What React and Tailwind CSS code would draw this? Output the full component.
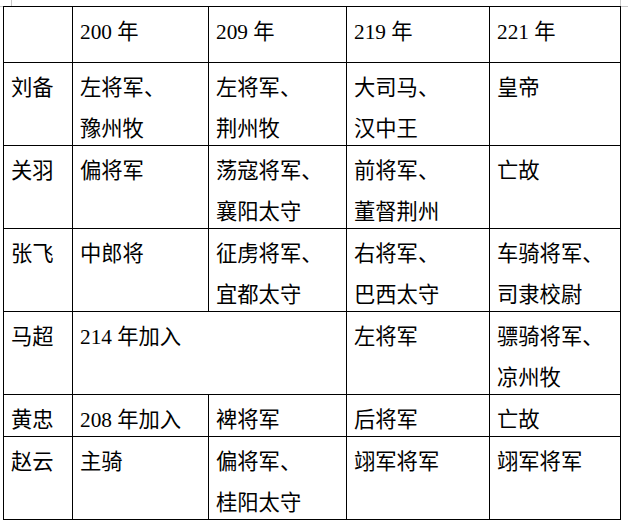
import React from "react";

const rows = [
  ["", "200 年", "209 年", "219 年", "221 年"],
  ["刘备", "左将军、\n豫州牧", "左将军、\n荆州牧", "大司马、\n汉中王", "皇帝"],
  ["关羽", "偏将军", "荡寇将军、\n襄阳太守", "前将军、\n董督荆州", "亡故"],
  ["张飞", "中郎将", "征虏将军、\n宜都太守", "右将军、\n巴西太守", "车骑将军、\n司隶校尉"],
  ["马超", { text: "214 年加入", span: 2 }, "左将军", "骠骑将军、\n凉州牧"],
  ["黄忠", "208 年加入", "裨将军", "后将军", "亡故"],
  ["赵云", "主骑", "偏将军、\n桂阳太守", "翊军将军", "翊军将军"],
];

function Cell({ value }) {
  const item = typeof value === "string" ? { text: value, span: 1 } : value;
  return (
    <div
      className={`bg-white pl-[7px] pt-[5px] whitespace-pre-line leading-[41px] ${
        item.span === 2 ? "col-span-2" : ""
      }`}
    >
      {item.text}
    </div>
  );
}

export default function App() {
  return (
    <div
      className="relative min-h-[524px] bg-white pl-[3px] pt-[6px] text-black text-[21.3px]"
      style={{ fontFamily: '"Liberation Serif", "Noto Sans CJK SC", serif' }}
    >
      {/* page corner marks */}
      <div className="absolute left-[11px] top-0 h-[6px] w-px bg-[#c8c8c8]" />
      <div className="absolute left-0 top-[6px] h-px w-[3px] bg-[#c8c8c8]" />
      <div className="absolute left-[620px] top-0 h-[6px] w-px bg-[#c8c8c8]" />
      <div className="absolute left-[621px] top-[6px] h-px w-[7px] bg-[#c8c8c8]" />

      <div className="grid w-fit grid-cols-[68px_135px_137px_142px_130px] grid-rows-[55px_82px_82px_82px_82px_41px_82px] gap-px border border-black bg-black">
        {rows.map((row, i) =>
          row.map((value, j) => <Cell key={`${i}-${j}`} value={value} />)
        )}
      </div>
    </div>
  );
}
